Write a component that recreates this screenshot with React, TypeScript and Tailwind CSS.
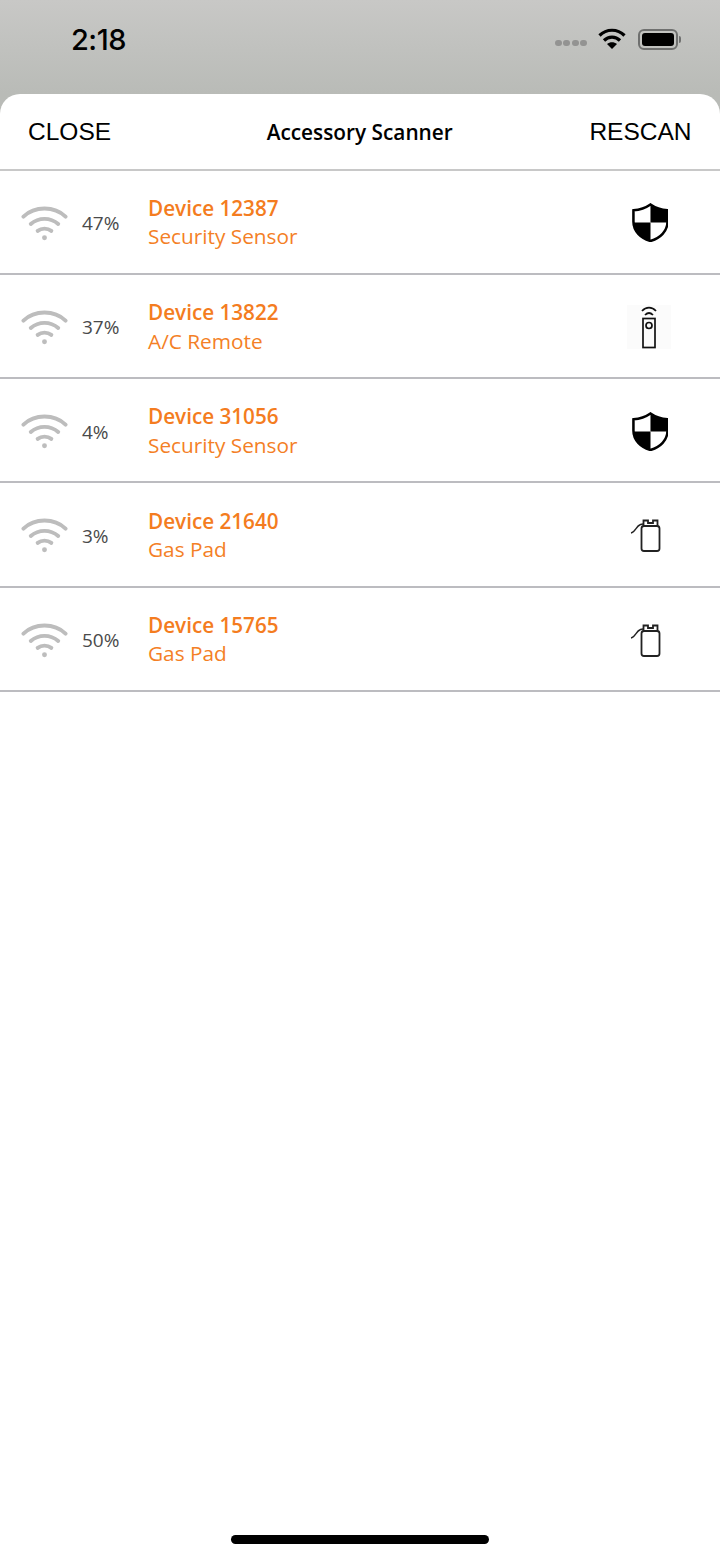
import React from 'react';

type Kind = 'shield' | 'remote' | 'gas';

interface Device {
  name: string;
  type: string;
  signal: string;
  kind: Kind;
}

const devices: Device[] = [
  { name: 'Device 12387', type: 'Security Sensor', signal: '47%', kind: 'shield' },
  { name: 'Device 13822', type: 'A/C Remote', signal: '37%', kind: 'remote' },
  { name: 'Device 31056', type: 'Security Sensor', signal: '4%', kind: 'shield' },
  { name: 'Device 21640', type: 'Gas Pad', signal: '3%', kind: 'gas' },
  { name: 'Device 15765', type: 'Gas Pad', signal: '50%', kind: 'gas' },
];

const WifiIcon = () => (
  <svg width="47" height="36" viewBox="0 0 48 36" fill="none" stroke="#bdbdbd" strokeLinecap="round" strokeWidth="4">
    <path d="M2.5 11.5C14 0.5 34 0.5 45.5 11.5" />
    <path d="M10 19C18 12 30 12 38 19" />
    <path d="M17 26C21 23 27 23 31 26" />
    <circle cx="24" cy="33" r="2.5" fill="#bdbdbd" stroke="none" />
  </svg>
);

const ShieldIcon = () => (
  <svg width="37" height="39" viewBox="-1 0 38 40">
    <path
      d="M19 1.5C14 5 8 7 1.5 7.5V19C1.5 29 9 36 19 39C29 36 36.5 29 36.5 19V7.5C30 7 24 5 19 1.5Z"
      fill="#fff"
      stroke="#000"
      strokeWidth="2.6"
    />
    <path d="M19 1.5C24 5 30 7 36.5 7.5V20H19Z" fill="#000" />
    <path d="M19 20H1.5C2 30 9 36 19 39Z" fill="#000" />
  </svg>
);

const RemoteIcon = () => (
  <div className="flex h-[44px] w-[44px] items-center justify-center bg-[#fbfbfb]">
    <svg width="24" height="44" viewBox="0 0 24 44" fill="none" stroke="#111" strokeWidth="1.7">
      <path d="M5 6C9 1.5 15 1.5 19 6" />
      <path d="M8 10C10.5 7.5 13.5 7.5 16 10" />
      <rect x="6" y="13.5" width="12" height="29" />
      <circle cx="12" cy="20.5" r="3" />
    </svg>
  </div>
);

const GasIcon = () => (
  <svg width="38" height="34" viewBox="0 0 38 34" fill="none" stroke="#222" strokeWidth="1.8">
    <rect x="11.5" y="8" width="18" height="25" rx="2.5" />
    <path d="M13.5 8V2.5H18V5H23V2.5H27.5V8" />
    <path d="M1 15C5 14.5 6 8 10.5 6.5L13 6" strokeWidth="1.4" />
  </svg>
);

const deviceIcon = (kind: Kind) => {
  if (kind === 'shield') return <ShieldIcon />;
  if (kind === 'remote') return <RemoteIcon />;
  return <GasIcon />;
};

export default function App() {
  return (
    <div className="relative flex min-h-[1558px] flex-col bg-[#b9bbb7] font-['Liberation_Sans',sans-serif]">
      {/* Status bar */}
      <div className="h-[114px] bg-gradient-to-b from-[#c8c8c6] to-[#b9bbb7] to-[82%]">
        <div className="flex items-start justify-between pl-[71px] pr-[39px] pt-[21px]">
          <span className="text-[29px] font-medium leading-[38px] tracking-[-0.5px] text-black font-['Inter',sans-serif]">2:18</span>
          <div className="flex items-center pt-[7px]">
            <div className="mt-[7px] mr-[11px] flex gap-[1.5px]">
              <span className="h-[6px] w-[7px] rounded-full bg-[#939392]" />
              <span className="h-[6px] w-[7px] rounded-full bg-[#939392]" />
              <span className="h-[6px] w-[7px] rounded-full bg-[#939392]" />
              <span className="h-[6px] w-[7px] rounded-full bg-[#939392]" />
            </div>
            <svg width="28" height="22" viewBox="0 0 28 22" fill="none" stroke="#000" strokeWidth="3.2">
              <path d="M1.5 7.5C8.5 0.5 19.5 0.5 26.5 7.5" />
              <path d="M6 12.5C10.5 8 17.5 8 22 12.5" />
              <path d="M14 21L9 16C12 13.5 16 13.5 19 16Z" fill="#000" stroke="none" />
            </svg>
            <div className="ml-[12px] h-[21px] w-[40px] rounded-[6px] border-2 border-[#6f706f] p-[2px]">
              <div className="h-full w-full rounded-[3px] bg-black" />
            </div>
            <span className="ml-[1px] h-[7px] w-[2px] rounded-r-full bg-[#6f706f]" />
          </div>
        </div>
      </div>

      {/* Sheet */}
      <div className="relative -mt-[20px] flex flex-1 flex-col rounded-t-[20px] bg-white">
        <header className="grid h-[76.5px] grid-cols-[1fr_auto_1fr] items-center border-b-2 border-[#c8c8c8] pl-[28px] pr-[28.5px] pt-[2px]">
          <span className="text-[24.5px] leading-none text-black">CLOSE</span>
          <span className="text-[20.8px] font-semibold leading-none text-black font-['Open_Sans',sans-serif]">Accessory Scanner</span>
          <span className="text-right text-[24.5px] leading-none text-black">RESCAN</span>
        </header>

        <ul>
          {devices.map((device) => (
            <li
              key={device.name}
              className="flex h-[104.25px] items-center border-b-2 border-[#bcbcc0] pl-[21px] pr-[49px] pt-[2px] font-['Open_Sans',sans-serif]"
            >
              <WifiIcon />
              <span className="ml-[14px] mt-[2px] w-[66px] text-[19px] leading-none text-[#4a4a4a]">{device.signal}</span>
              <div className="flex-1">
                <p className="text-[20.7px] font-semibold leading-[29px] text-[#f47c20]">{device.name}</p>
                <p className="-mt-[0.5px] text-[20.8px] leading-[29px] text-[#f47f26]">{device.type}</p>
              </div>
              <div className="flex w-[44px] justify-center">{deviceIcon(device.kind)}</div>
            </li>
          ))}
        </ul>

        <div className="mt-auto flex justify-center pb-[14px]">
          <span className="h-[9px] w-[258px] rounded-full bg-black" />
        </div>
      </div>
    </div>
  );
}
